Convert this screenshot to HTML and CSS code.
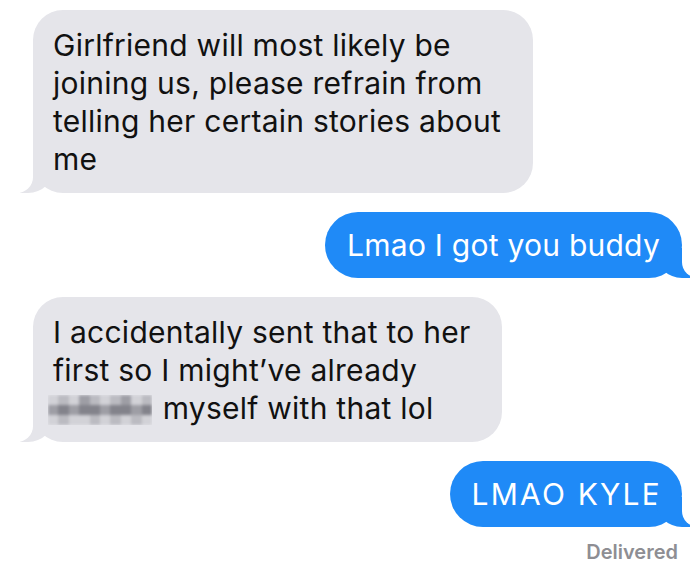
FILE: index.html
```html
<!DOCTYPE html>
<html lang="en">
<head>
    <meta charset="UTF-8">
    <meta name="viewport" content="width=device-width, initial-scale=1.0">
    <title>Messages</title>
    <link rel="stylesheet" href="styles.css">
</head>
<body>

    <div id="conversacion">

        <div class="burbuja recibido">
            Girlfriend will most likely be<br>
            joining us, please refrain from<br>
            telling her certain stories about<br>
            me
        </div>

        <div class="burbuja enviado">Lmao I got you buddy</div>

        <div class="burbuja recibido">
            I accidentally sent that to her<br>
            first so I might&rsquo;ve already<br>
            <span class="censura" aria-label="censored"><span class="mosaico">
                <i class="c1"></i><i class="c2"></i><i class="c1"></i><i class="c3"></i><i class="c2"></i><i class="c1"></i><i class="c2"></i><i class="c3"></i><i class="c1"></i><i class="c2"></i>
                <i class="c3"></i><i class="c4"></i><i class="c3"></i><i class="c4"></i><i class="c4"></i><i class="c3"></i><i class="c4"></i><i class="c4"></i><i class="c3"></i><i class="c4"></i>
                <i class="c1"></i><i class="c2"></i><i class="c1"></i><i class="c1"></i><i class="c2"></i><i class="c1"></i><i class="c2"></i><i class="c1"></i><i class="c2"></i><i class="c1"></i>
            </span></span> myself with that lol
        </div>

        <div class="burbuja enviado mayus">LMAO KYLE</div>

        <div id="estado">Delivered</div>

    </div>

</body>
</html>
```
FILE: styles.css
```css
body{
    margin: 0;
    background-color: #ffffff;
    font-family: Inter, "Liberation Sans", Arial, sans-serif;
}

#conversacion{
    display: flex;
    flex-direction: column;
    gap: 19px;
    padding: 10px 18px 0 33px;
}

.burbuja{
    position: relative;
    width: fit-content;
    font-size: 30px;
    letter-spacing: 0.25px;
    line-height: 38px;
    border-radius: 30px;
}

.recibido{
    align-self: flex-start;
    background-color: #e5e5ea;
    color: #111111;
    padding: 16px 32px 15px 20px;
}

.enviado{
    align-self: flex-end;
    background-color: #1f8af7;
    color: #ffffff;
    padding: 14px 22px;
    border-radius: 33px;
}

.mayus{
    letter-spacing: 2.2px;
    padding: 14px 20px 14px 22px;
}

/* colitas */
.burbuja::before,
.burbuja::after{
    content: "";
    position: absolute;
    bottom: 0;
    height: 30px;
}

.recibido::before{
    left: -13px;
    width: 34px;
    background-color: #e5e5ea;
    border-bottom-right-radius: 26px;
    z-index: 0;
}

.recibido::after{
    left: -20px;
    width: 20px;
    background-color: #ffffff;
    border-bottom-right-radius: 16px;
    z-index: 1;
}

.enviado::before{
    right: -8px;
    width: 34px;
    background-color: #1f8af7;
    border-bottom-left-radius: 26px;
    z-index: 0;
}

.enviado::after{
    right: -20px;
    width: 20px;
    background-color: #ffffff;
    border-bottom-left-radius: 16px;
    z-index: 1;
}

.censura{
    display: inline-block;
    overflow: hidden;
    width: 104px;
    height: 30px;
    vertical-align: -6px;
    margin-left: -5px;
    margin-right: 2px;
}

.mosaico{
    display: grid;
    grid-template-columns: repeat(10, 1fr);
    grid-template-rows: repeat(3, 10px);
    filter: blur(1.5px);
}

.mosaico i{
    display: block;
}

.c1{ background-color: #d2d2d7; }
.c2{ background-color: #bbbbc1; }
.c3{ background-color: #9e9ea5; }
.c4{ background-color: #83838b; }

#estado{
    align-self: flex-end;
    margin-top: -6px;
    margin-right: 4px;
    font-size: 20px;
    font-weight: 600;
    color: #8e8e93;
}
```
